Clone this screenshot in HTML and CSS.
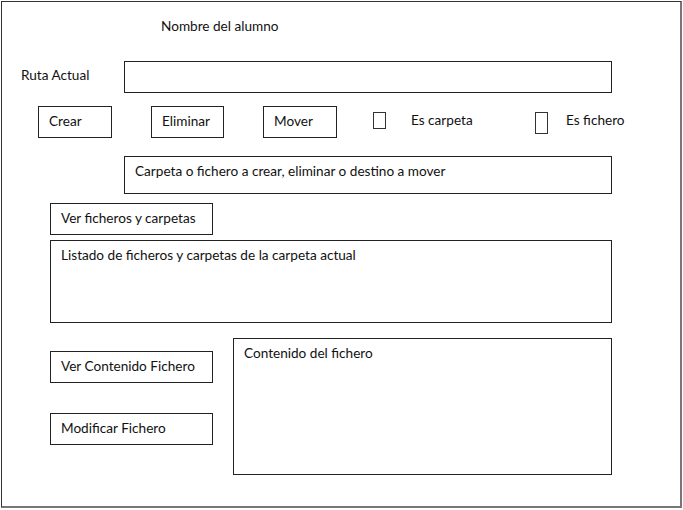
FILE: index.html
```html
<!DOCTYPE html>
<html lang="es">
<head>
<meta charset="utf-8">
<title>Wireframe</title>
<link rel="stylesheet" href="styles.css">
</head>
<body>
<div class="frame">
  <div class="title">Nombre del alumno</div>

  <div class="row ruta">
    <div class="label">Ruta Actual</div>
    <div class="box input"></div>
  </div>

  <div class="row actions">
    <div class="box btn btn-crear">Crear</div>
    <div class="box btn btn-eliminar">Eliminar</div>
    <div class="box btn btn-mover">Mover</div>
    <div class="check check-carpeta"></div>
    <div class="check-label lbl-carpeta">Es carpeta</div>
    <div class="check check-fichero"></div>
    <div class="check-label lbl-fichero">Es fichero</div>
  </div>

  <div class="box target">Carpeta o fichero a crear, eliminar o destino a mover</div>

  <div class="box btn wide ver-ficheros">Ver ficheros y carpetas</div>

  <div class="box listado">Listado de ficheros y carpetas de la carpeta actual</div>

  <div class="row bottom">
    <div class="col">
      <div class="box btn wide ver-contenido">Ver Contenido Fichero</div>
      <div class="box btn wide modificar">Modificar Fichero</div>
    </div>
    <div class="box contenido">Contenido del fichero</div>
  </div>
</div>
</body>
</html>
```

FILE: styles.css
```css
* { box-sizing: border-box; }

html, body {
  margin: 0;
  padding: 0;
  background: #fff;
}

body {
  font-family: Lato, "Open Sans", sans-serif;
  font-size: 13.6px;
  color: #111;
  line-height: 18px;
}

.frame {
  margin: 1px 0 0 1px;
  width: 681px;
  height: 507px;
  border: 1px solid #555;
  border-right-width: 2px;
  border-bottom-width: 2px;
  border-color: #333 #777 #777 #333;
  display: flex;
  flex-direction: column;
}

.title {
  margin: 15px 0 0 159px;
}

.row {
  display: flex;
}

.box {
  border: 1px solid #222;
}

.ruta {
  margin-top: 26px;
  align-items: center;
}

.label {
  width: 122px;
  padding-left: 19px;
  margin-top: -4px;
}

.input {
  width: 488px;
  height: 32px;
}

.actions {
  margin-top: 13px;
  align-items: flex-start;
}

.btn {
  height: 32px;
  display: flex;
  align-items: center;
  padding: 0 0 2px 10px;
}

.btn-crear { margin-left: 36px; width: 74px; }
.btn-eliminar { margin-left: 39px; width: 73px; }
.btn-mover { margin-left: 39px; width: 74px; }

.check {
  border: 1px solid #333;
  margin-top: 6px;
  width: 13px;
}

.check-carpeta { margin-left: 36px; height: 17px; }
.check-fichero { margin-left: 0; height: 22px; }

.check-label {
  margin-top: 5px;
}

.lbl-carpeta { margin-left: 25px; width: 124px; }
.lbl-fichero { margin-left: 18px; }

.target {
  margin: 18px 0 0 122px;
  width: 488px;
  height: 38px;
  padding: 5px 0 0 10px;
}

.wide {
  width: 163px;
}

.ver-ficheros {
  margin: 9px 0 0 48px;
}

.listado {
  margin: 5px 0 0 48px;
  width: 562px;
  height: 83px;
  padding: 5px 0 0 10px;
}

.bottom {
  margin-top: 15px;
  align-items: flex-start;
}

.col {
  display: flex;
  flex-direction: column;
  margin: 13px 0 0 48px;
  gap: 30px;
}

.contenido {
  margin-left: 20px;
  width: 379px;
  height: 137px;
  padding: 5px 0 0 10px;
}
```
